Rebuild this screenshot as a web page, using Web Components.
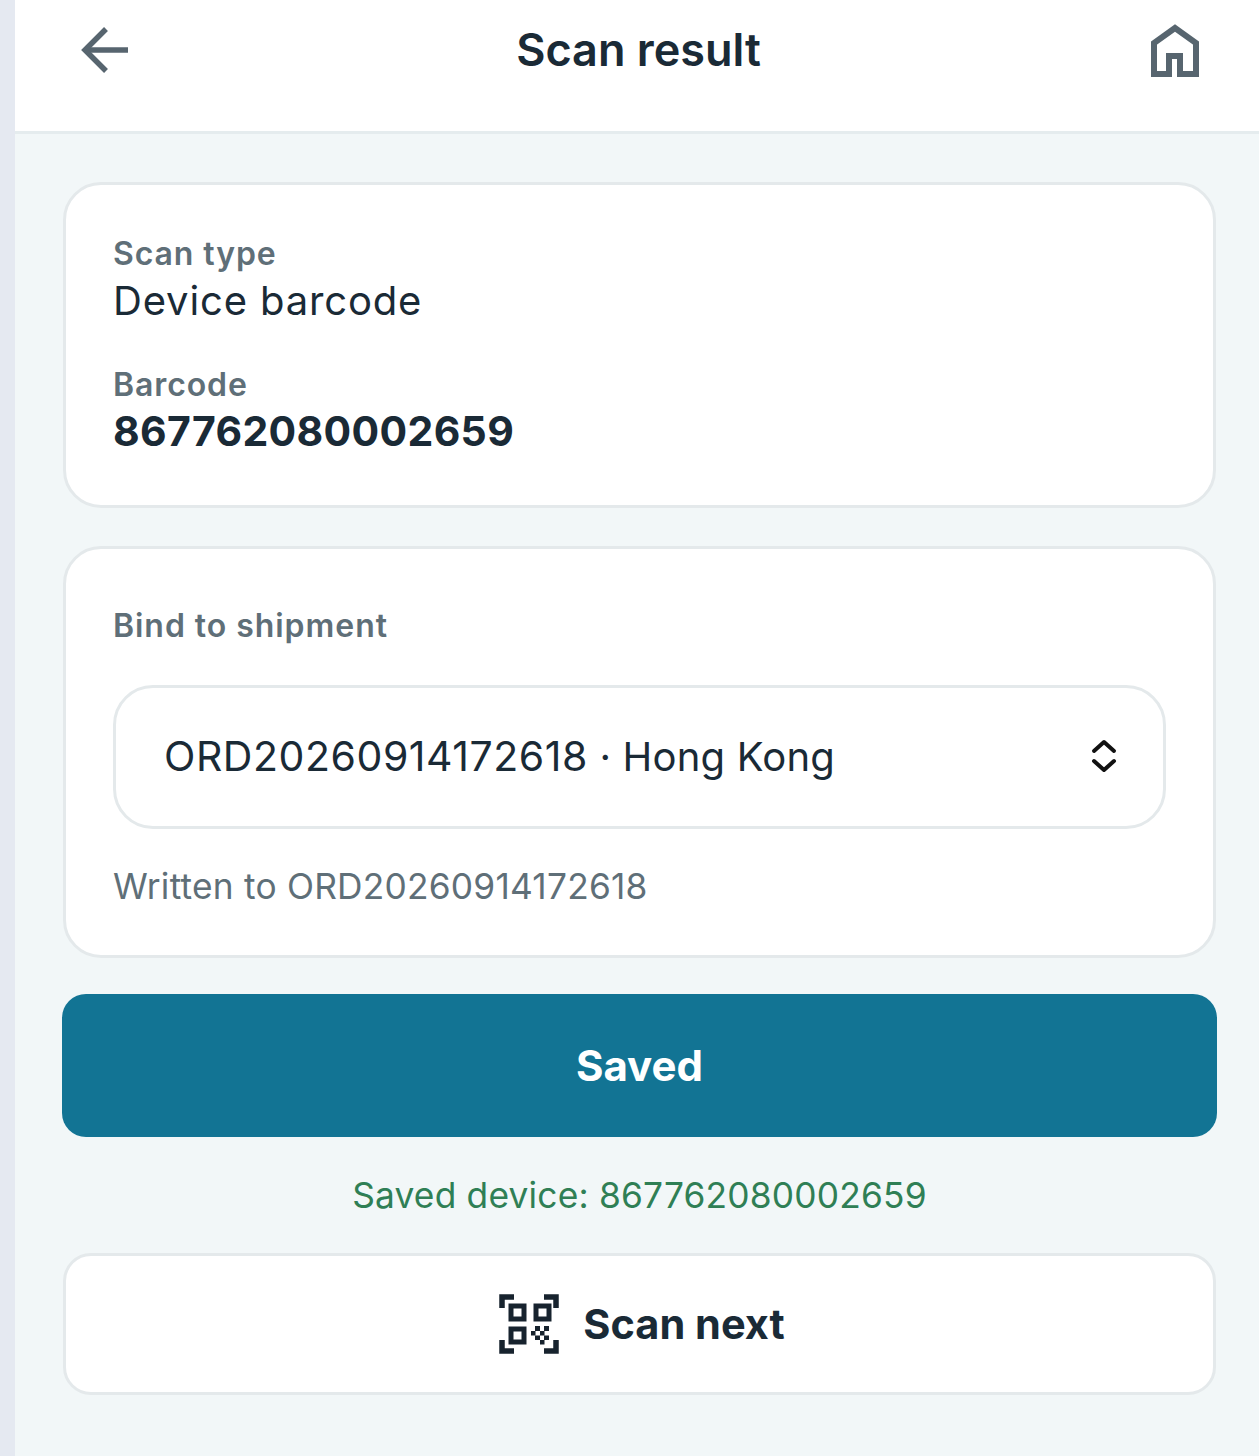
<!DOCTYPE html>
<html lang="en">
<head>
<meta charset="utf-8">
<title>Scan result</title>
<style>
  html, body { margin: 0; padding: 0; }
  body {
    width: 1259px;
    height: 1456px;
    overflow: hidden;
    background: #f2f7f8;
    font-family: Inter, "Liberation Sans", sans-serif;
    color: #1a2a36;
  }
</style>
</head>
<body>
<scan-page>
  <scan-header title="Scan result"></scan-header>
  <scan-card style="height:326px">
    <scan-field label="Scan type" value="Device barcode"></scan-field>
    <scan-field label="Barcode" value="867762080002659" strong style="margin-top:40px"></scan-field>
  </scan-card>
  <scan-card style="height:412px;margin-top:38px">
    <bind-select label="Bind to shipment" order="ORD20260914172618" place="Hong Kong" note="Written to ORD20260914172618"></bind-select>
  </scan-card>
  <save-button>Saved</save-button>
  <saved-note>Saved device: 867762080002659</saved-note>
  <next-button>Scan next</next-button>
</scan-page>

<script>
// Small helper so each element just declares its styles and markup
class ShadowElement extends HTMLElement {
  constructor() {
    super();
    this.attachShadow({ mode: 'open' });
  }
  connectedCallback() {
    this.shadowRoot.innerHTML = `<style>${this.styles()}</style>${this.markup()}`;
  }
  attr(name) {
    return this.getAttribute(name) || '';
  }
}

class ScanPage extends ShadowElement {
  styles() {
    return `
      :host { display: block; position: relative; height: 1456px; }
      .strip { position: absolute; left: 0; top: 0; bottom: 0; width: 15px; background: #e5e9f1; }
    `;
  }
  markup() {
    return `<div class="strip"></div><slot></slot>`;
  }
}

class ScanHeader extends ShadowElement {
  styles() {
    return `
      :host {
        display: grid;
        grid-template-columns: 1fr auto 1fr;
        align-items: center;
        height: 99px;
        padding: 0 59px 32px 79px;
        background: #fff;
        border-bottom: 3px solid #e5ecee;
        margin-bottom: 48px;
      }
      h1 { margin: 0 2px 0 0; font-size: 45px; font-weight: 600; color: #1a2a36; }
      svg { display: block; }
      .home { justify-self: end; }
    `;
  }
  markup() {
    return `
      <svg width="50" height="50" viewBox="0 0 50 50" fill="none" stroke="#57656f" stroke-width="5.5">
        <path d="M49 25H7"/><path d="M27 4L6 25l21 21"/>
      </svg>
      <h1>${this.attr('title')}</h1>
      <svg class="home" width="50" height="54" viewBox="0 0 50 54" fill="none" stroke="#57656f" stroke-width="6">
        <path d="M4 51V20L25 5l21 15v31H30V33H19v18z"/>
      </svg>
    `;
  }
}

class ScanCard extends ShadowElement {
  styles() {
    return `
      :host {
        display: block;
        box-sizing: border-box;
        margin: 0 43px 0 63px;
        padding: 49px 47px;
        background: #fff;
        border: 3px solid #e4e9eb;
        border-radius: 38px;
      }
    `;
  }
  markup() {
    return `<slot></slot>`;
  }
}

class ScanField extends ShadowElement {
  styles() {
    return `
      :host { display: block; }
      .label { font-size: 32px; line-height: 39px; font-weight: 600; color: #5f6f78; letter-spacing: 0.9px; }
      .value { margin-top: 3px; font-size: 40px; line-height: 49px; font-weight: 400; color: #1a2a36; letter-spacing: 0.85px; }
      .value.strong { font-size: 41px; font-weight: 700; letter-spacing: 0.33px; }
    `;
  }
  markup() {
    const cls = this.hasAttribute('strong') ? 'value strong' : 'value';
    return `<div class="label">${this.attr('label')}</div><div class="${cls}">${this.attr('value')}</div>`;
  }
}

class BindSelect extends ShadowElement {
  styles() {
    return `
      :host { display: block; }
      .label { font-size: 32px; line-height: 39px; font-weight: 600; color: #5f6f78; letter-spacing: 0.95px; margin-top: 8px; }
      .select {
        box-sizing: border-box;
        display: flex;
        align-items: center;
        justify-content: space-between;
        height: 144px;
        margin-top: 40px;
        padding: 0 46px 2px 48px;
        border: 3px solid #e4e9eb;
        border-radius: 40px;
        font-size: 40px;
        letter-spacing: 0.2px;
        color: #1a2a36;
      }
      .order { font-size: 41px; letter-spacing: 0.55px; }
      .note { margin-top: 36px; font-size: 35.3px; line-height: 44px; color: #5f6f78; letter-spacing: 0.22px; }
    `;
  }
  markup() {
    return `
      <div class="label">${this.attr('label')}</div>
      <div class="select">
        <span><span class="order">${this.attr('order')}</span> · ${this.attr('place')}</span>
        <svg width="26" height="34" viewBox="0 0 26 34" fill="none" stroke="#111" stroke-width="4" stroke-linecap="round" stroke-linejoin="round">
          <path d="M3 12l10-9 10 9"/><path d="M3 22l10 9 10-9"/>
        </svg>
      </div>
      <div class="note">${this.attr('note')}</div>
    `;
  }
}

class SaveButton extends ShadowElement {
  styles() {
    return `
      :host {
        display: flex;
        align-items: center;
        justify-content: center;
        height: 143px;
        margin: 36px 42px 0 62px;
        background: #127494;
        border-radius: 24px;
        color: #fff;
        font-size: 42px;
        font-weight: 700;
      }
    `;
  }
  markup() {
    return `<slot></slot>`;
  }
}

class SavedNote extends ShadowElement {
  styles() {
    return `
      :host {
        display: block;
        margin: 37px 43px 0 63px;
        text-align: center;
        font-size: 35.3px;
        line-height: 44px;
        letter-spacing: 0.2px;
        color: #2f7f55;
      }
    `;
  }
  markup() {
    return `<slot></slot>`;
  }
}

class NextButton extends ShadowElement {
  styles() {
    return `
      :host {
        display: flex;
        align-items: center;
        justify-content: center;
        gap: 24px;
        box-sizing: border-box;
        height: 142px;
        margin: 35px 43px 0 63px;
        padding-left: 5px;
        background: #fff;
        border: 3px solid #e4e9eb;
        border-radius: 28px;
        color: #1a2a36;
        font-size: 41.5px;
        font-weight: 700;
      }
    `;
  }
  markup() {
    return `
      <svg width="60" height="60" viewBox="0 0 60 60" fill="none" stroke="#17232e" stroke-width="5.5">
        <path d="M15 3H3v11"/><path d="M45 3h12v11"/><path d="M3 46v11h12"/><path d="M45 57h12V46"/>
        <g stroke-width="5">
          <rect x="12" y="12" width="13" height="13"/><rect x="37" y="12" width="13" height="13"/><rect x="12" y="35" width="13" height="13"/>
        </g>
        <g fill="#17232e" stroke="none">
          <rect x="36" y="32" width="5" height="5"/><rect x="45" y="32" width="5" height="5"/>
          <rect x="32" y="37" width="4.5" height="4.5"/><rect x="41" y="37" width="4.5" height="4.5"/>
          <rect x="36" y="41.5" width="5" height="4.5"/><rect x="45" y="41.5" width="5" height="4.5"/>
          <rect x="41" y="46" width="4.5" height="4.5"/>
        </g>
      </svg>
      <slot></slot>
    `;
  }
}

customElements.define('scan-page', ScanPage);
customElements.define('scan-header', ScanHeader);
customElements.define('scan-card', ScanCard);
customElements.define('scan-field', ScanField);
customElements.define('bind-select', BindSelect);
customElements.define('save-button', SaveButton);
customElements.define('saved-note', SavedNote);
customElements.define('next-button', NextButton);
</script>
</body>
</html>
